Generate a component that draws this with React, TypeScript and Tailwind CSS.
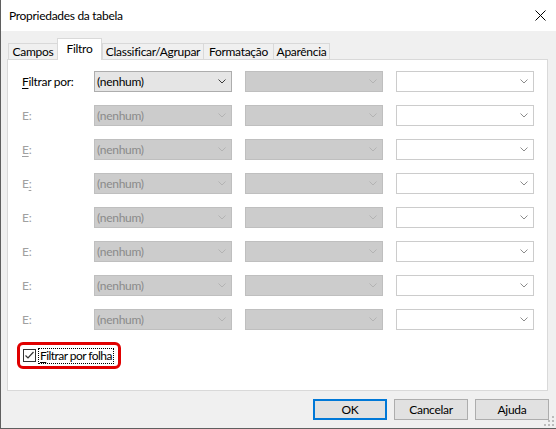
import React from "react";

type ComboKind = "active" | "disabled" | "blank";

const Chevron = ({ color }: { color: string }) => (
  <svg width="8" height="5" viewBox="0 0 8 5" className="shrink-0">
    <polyline points="0.5,0.5 4,4 7.5,0.5" fill="none" stroke={color} strokeWidth="1" />
  </svg>
);

function Combo({ kind, text }: { kind: ComboKind; text?: string }) {
  const box =
    kind === "active"
      ? "bg-[#e5e5e5] border-[#adadad]"
      : kind === "disabled"
      ? "bg-[#cccccc] border-[#bfbfbf]"
      : "bg-white border-[#cccccc]";
  const textColor = kind === "active" ? "text-black" : "text-[#8a8a8a]";
  const arrow = kind === "active" ? "#3c3c3c" : kind === "disabled" ? "#b3b3b3" : "#8c8c8c";
  return (
    <div
      className={`flex h-[21px] w-[138px] shrink-0 items-center justify-between border pl-[2px] pr-[5px] ${box}`}
    >
      <span className={textColor}>{text}</span>
      <Chevron color={arrow} />
    </div>
  );
}

// label text with an access-key underline at position `keyIndex`
function AccessLabel({ text, keyIndex }: { text: string; keyIndex?: number }) {
  if (keyIndex === undefined) return <>{text}</>;
  return (
    <>
      {text.slice(0, keyIndex)}
      <span className="underline underline-offset-[2px]">{text[keyIndex]}</span>
      {text.slice(keyIndex + 1)}
    </>
  );
}

const filterRows = [
  { label: "Filtrar por:", keyIndex: 0, enabled: true },
  { label: "E:", enabled: false },
  { label: "E:", keyIndex: 0, enabled: false },
  { label: "E:", keyIndex: 1, enabled: false },
  { label: "E:", enabled: false },
  { label: "E:", enabled: false },
  { label: "E:", enabled: false },
  { label: "E:", enabled: false },
];

const tabs = [
  { name: "Campos", w: "w-[49px]" },
  { name: "Filtro", w: "w-[45px]", active: true },
  { name: "Classificar/Agrupar", w: "w-[101px]" },
  { name: "Formatação", w: "w-[70px]" },
  { name: "Aparência", w: "w-[57px]" },
];

export default function App() {
  return (
    <div className="relative flex h-[429px] w-[556px] flex-col whitespace-nowrap border-b border-l border-[#5f5f5f] bg-[#f0f0f0] font-['Lato',sans-serif] text-[12px] leading-none tracking-[-0.3px] text-black">
      {/* title bar */}
      <div className="flex h-[31px] shrink-0 items-center justify-between bg-white pl-[8px] pr-[10px]">
        <span>Propriedades da tabela</span>
        <svg width="11" height="11" viewBox="0 0 11 11">
          <path d="M0.5 0.5 L10.5 10.5 M10.5 0.5 L0.5 10.5" stroke="#000" strokeWidth="1" />
        </svg>
      </div>

      {/* tab strip */}
      <div className="ml-[7px] mt-[7px] flex h-[21px] items-end">
        {tabs.map((t) =>
          t.active ? (
            <div
              key={t.name}
              className={`relative z-10 -mb-px flex h-[22px] ${t.w} justify-center border-x border-t border-[#d9d9d9] bg-white pt-[4px]`}
            >
              {t.name}
            </div>
          ) : (
            <div
              key={t.name}
              className={`flex h-[16px] ${t.w} items-center justify-center border-l border-t border-[#d9d9d9] bg-[#f0f0f0] pt-[1px] last:border-r`}
            >
              {t.name}
            </div>
          )
        )}
      </div>

      {/* tab page */}
      <div className="ml-[6px] h-[332px] w-[541px] shrink-0 border border-[#d9d9d9] bg-white pl-[14px] pt-[11px]">
        <div className="flex flex-col gap-[13px]">
          {filterRows.map((r, i) => (
            <div key={i} className="flex items-center">
              <div className={`w-[72px] ${r.enabled ? "text-black" : "text-[#a0a0a0]"}`}>
                <AccessLabel text={r.label} keyIndex={r.keyIndex} />
              </div>
              <div className="flex gap-[13px]">
                <Combo kind={r.enabled ? "active" : "disabled"} text="(nenhum)" />
                <Combo kind="disabled" />
                <Combo kind="blank" />
              </div>
            </div>
          ))}
        </div>

        <div className="-ml-[5px] mt-[12px] inline-flex h-[27px] w-[104px] items-center rounded-[6px] border-[3px] border-[#e00000] pl-[3px]">
          <div className="flex h-[13px] w-[13px] shrink-0 items-center justify-center border border-[#333333] bg-white">
            <svg width="11" height="11" viewBox="0 0 11 11">
              <polyline points="1.5,5.5 4,8 9.5,2" fill="none" stroke="#333" strokeWidth="1.2" />
            </svg>
          </div>
          <div className="ml-[2px] flex h-[16px] items-center border border-dotted border-black px-[1px] tracking-[-0.55px]">
            <AccessLabel text="Filtrar por folha" keyIndex={0} />
          </div>
        </div>
      </div>

      {/* dialog buttons */}
      <div className="mt-[8px] flex justify-end gap-[7px] pr-[7px]">
        <button className="flex h-[21px] w-[74px] items-center justify-center border-2 border-[#0078d7] bg-[#e1e1e1]">
          OK
        </button>
        <button className="flex h-[21px] w-[74px] items-center justify-center border border-[#adadad] bg-[#e1e1e1]">
          Cancelar
        </button>
        <button className="flex h-[21px] w-[74px] items-center justify-center border border-[#adadad] bg-[#e1e1e1]">
          Ajuda
        </button>
      </div>

      {/* size grip */}
      <svg width="10" height="10" viewBox="0 0 10 10" className="absolute bottom-[2px] right-[2px]">
        <rect x="8" y="0" width="2" height="2" fill="#bcbcbc" />
        <rect x="4" y="4" width="2" height="2" fill="#bcbcbc" />
        <rect x="8" y="4" width="2" height="2" fill="#bcbcbc" />
        <rect x="0" y="8" width="2" height="2" fill="#bcbcbc" />
        <rect x="4" y="8" width="2" height="2" fill="#bcbcbc" />
        <rect x="8" y="8" width="2" height="2" fill="#bcbcbc" />
      </svg>
    </div>
  );
}
